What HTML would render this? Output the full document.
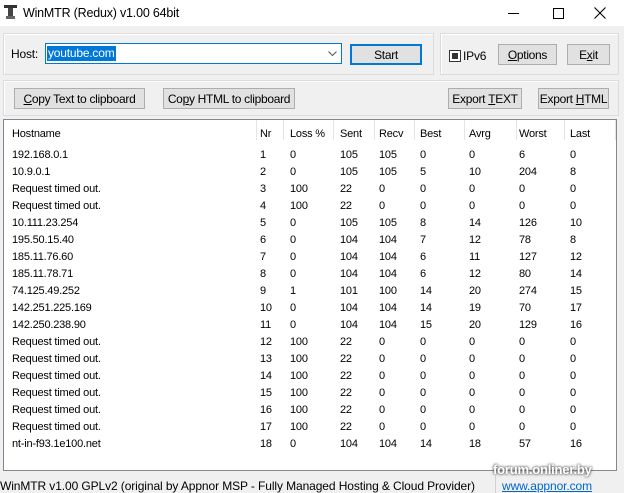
<!DOCTYPE html>
<html><head><meta charset="utf-8"><style>
*{margin:0;padding:0;box-sizing:border-box}
body{width:624px;height:493px;background:#f0f0f0;font-family:"Liberation Sans",sans-serif;font-size:11px;color:#000;position:relative;overflow:hidden;letter-spacing:-0.2px}
.a{position:absolute}
.title{left:0;top:0;width:624px;height:26px;background:#fff}
.grp{border:1px solid #dcdcdc;box-shadow:inset 1px 1px 0 #fff}
.btn{position:absolute;background:#e1e1e1;border:1px solid #adadad;display:flex;align-items:center;justify-content:center;font-size:12px;letter-spacing:-0.3px}
.lv{left:3px;top:119px;width:614px;height:352px;background:#fff;border:1px solid #828790}
.sep{position:absolute;top:0;width:1px;height:20px;background:#e5e5e5}
.c{position:absolute;white-space:nowrap}
</style></head><body>
<div class="a title">
 <svg class="a" style="left:4px;top:5px" width="13" height="14" viewBox="0 0 13 14"><rect x="0" y="0" width="13" height="3" fill="#333"/><rect x="4" y="3" width="5" height="10" fill="#444"/><rect x="2" y="11" width="9" height="3" fill="#666"/></svg>
 <div class="a" style="left:23px;top:6px;font-size:12.5px;letter-spacing:-0.2px">WinMTR (Redux) v1.00 64bit</div>
 <div class="a" style="left:508px;top:13px;width:11px;height:1px;background:#000"></div>
 <div class="a" style="left:553px;top:8px;width:11px;height:11px;border:1px solid #000"></div>
 <svg class="a" style="left:594px;top:7px" width="12" height="12"><path d="M0.5 0.5L11.5 11.5M11.5 0.5L0.5 11.5" stroke="#000" stroke-width="1.1"/></svg>
</div>
<div class="a grp" style="left:3px;top:33px;width:431px;height:42px"></div>
<div class="a grp" style="left:440px;top:33px;width:179px;height:42px"></div>
<div class="a grp" style="left:3px;top:80px;width:616px;height:36px"></div>
<div class="a" style="left:11px;top:47px;font-size:12px">Host:</div>
<div class="a" style="left:45px;top:43px;width:297px;height:21px;background:#fff;border:1px solid #0078d7"></div>
<div class="a" style="left:47px;top:46px;height:15px;background:#0078d7;color:#fff;font-size:12px;padding:0 1px;line-height:15px">youtube.com</div>
<svg class="a" style="left:328px;top:51px" width="9" height="6"><path d="M0.5 0.5L4.5 4.5L8.5 0.5" stroke="#555" fill="none"/></svg>
<div class="btn" style="left:350px;top:44px;width:72px;height:21px;border:2px solid #0078d7">Start</div>
<div class="a" style="left:449px;top:50px;width:12px;height:12px;border:1px solid #333;background:#fff"><div style="margin:2px;width:6px;height:6px;background:#333"></div></div>
<div class="a" style="left:463px;top:49px;font-size:12px">IPv6</div>
<div class="btn" style="left:498px;top:44px;width:59px;height:21px"><u>O</u>ptions</div>
<div class="btn" style="left:567px;top:44px;width:43px;height:21px">E<u>x</u>it</div>
<div class="btn" style="left:14px;top:88px;width:131px;height:21px"><u>C</u>opy Text to clipboard</div>
<div class="btn" style="left:163px;top:88px;width:132px;height:21px">Co<u>p</u>y HTML to clipboard</div>
<div class="btn" style="left:448px;top:88px;width:74px;height:21px">Export&nbsp;<u>T</u>EXT</div>
<div class="btn" style="left:538px;top:88px;width:71px;height:21px">Export&nbsp;<u>H</u>TML</div>
<div class="a lv">
 <div class="sep" style="left:252px"></div><div class="sep" style="left:279px"></div><div class="sep" style="left:329px"></div><div class="sep" style="left:370px"></div><div class="sep" style="left:410px"></div><div class="sep" style="left:460px"></div><div class="sep" style="left:512px"></div><div class="sep" style="left:560px"></div><div class="sep" style="left:611px"></div>
 <div id="rows"></div>
</div>
<div class="a" style="left:495px;top:476px;width:1px;height:17px;background:#d0d0d0"></div>
<div class="a" style="left:0;top:479px;font-size:12px;letter-spacing:-0.1px">WinMTR v1.00 GPLv2 (original by Appnor MSP - Fully Managed Hosting &amp; Cloud Provider)</div>
<div class="a" style="left:502px;top:479px;font-size:12px;color:#0066cc;text-decoration:underline;letter-spacing:-0.1px">www.appnor.com</div>
<div class="a" style="left:493px;top:462px;font-size:13px;font-weight:bold;color:#fff;text-shadow:0 0 3px #666,0 0 2px #444">forum.onliner.by</div>
<script>
var x=[8,256,286,336,375,416,465,515,566];
var d=[["Hostname","Nr","Loss %","Sent","Recv","Best","Avrg","Worst","Last"],
["192.168.0.1",1,0,105,105,0,0,6,0],["10.9.0.1",2,0,105,105,5,10,204,8],
["Request timed out.",3,100,22,0,0,0,0,0],["Request timed out.",4,100,22,0,0,0,0,0],
["10.111.23.254",5,0,105,105,8,14,126,10],["195.50.15.40",6,0,104,104,7,12,78,8],
["185.11.76.60",7,0,104,104,6,11,127,12],["185.11.78.71",8,0,104,104,6,12,80,14],
["74.125.49.252",9,1,101,100,14,20,274,15],["142.251.225.169",10,0,104,104,14,19,70,17],
["142.250.238.90",11,0,104,104,15,20,129,16]];
for(var i=12;i<=17;i++)d.push(["Request timed out.",i,100,22,0,0,0,0,0]);
d.push(["nt-in-f93.1e100.net",18,0,104,104,14,18,57,16]);
var h="";
d.forEach(function(r,j){var t=j==0?8:29+(j-1)*17;r.forEach(function(v,k){h+='<div class="c" style="left:'+x[k]+'px;top:'+t+'px">'+v+'</div>';});});
document.getElementById("rows").innerHTML=h;
</script>
</body></html>
